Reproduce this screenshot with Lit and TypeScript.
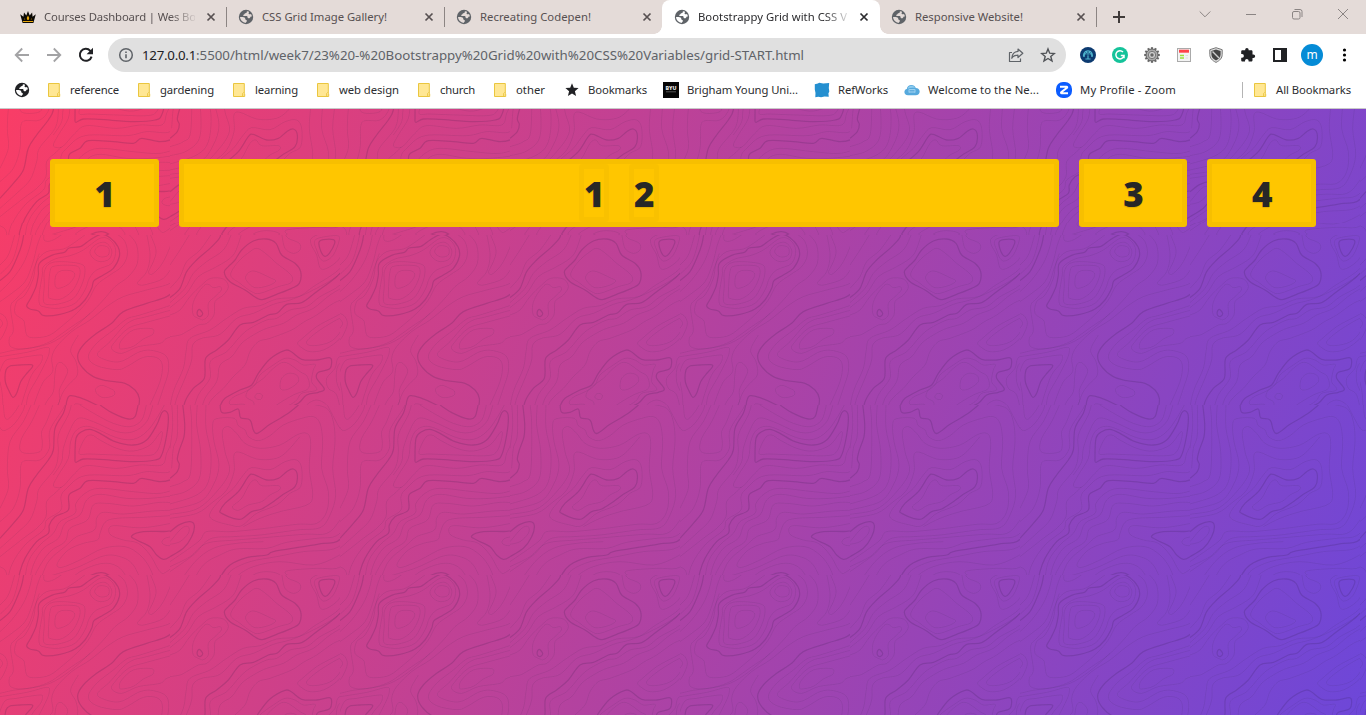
import { LitElement, html, css, svg } from "lit";
import { customElement } from "lit/decorators.js";

/* ---------- contour map background ---------- */

// Each quadrant of the tile lists its contours as flat "x,y" runs.
// A leading "h" marks a heavy line, a trailing "z" closes the loop.
const Q1 = `
h80,212 92,190 108,155 115,120 118,85 155,61 193,52 207,39 243,34 270,15 303,-2 330,8 354,35 358,65 340,100 310,120 282,137 275,160 255,195 225,222 180,238 132,242 115,228 90,222 z
h0,137 30,110 50,70 65,30 72,-6
h540,150 500,185 440,205 370,230 335,265 290,295 250,330 233,362 245,395 280,425 320,437 375,445 405,465 418,490 415,520 408,545
h18,405 30,393 60,390 93,389 97,396 78,418 62,440 50,475 39,487 28,470 16,440 z
h195,545 200,500 210,482 240,488 290,510 340,540
h485,545 490,532 500,532 504,545
165,150 168,120 185,107 215,108 224,122 205,148 175,160 z
145,180 150,110 165,93 225,92 240,105 235,135 215,170 180,193 150,190 z
130,195 133,150 133,110 150,85 190,80 245,88 255,110 245,150 220,190 175,207 140,208 z
118,205 118,175 127,120 130,95 165,72 210,62 250,45 300,10 330,15 347,45 335,85 290,105 268,130 255,165 225,205 175,220 130,215 z
285,45 300,32 325,38 325,60 305,66 288,58 z
270,50 285,30 315,22 335,45 328,72 300,80 278,68 z
350,-4 375,20 382,60 365,95 330,120 290,150 265,195 230,235 190,270 150,300 110,308 82,303 75,275 70,255 45,235 50,200 75,180 100,130 110,80 140,50 190,42 220,25 260,-4
0,90 25,60 45,-4
0,118 38,75 60,-4
0,170 35,135 70,85 88,40 98,-4
0,200 35,175 75,140 98,85 112,30 125,-4
385,-4 410,30 412,85 385,125 345,155 310,195 265,240 215,275 180,300 150,320 110,335 65,342 32,335 28,310 40,285 32,215 50,190 85,150 104,95 118,55
0,355 45,345 115,335 165,318 220,280 270,235
132,-4 133,16 155,17 190,-4
440,-4 450,60 440,110 413,142 420,150 440,148 490,130 520,90 540,60
450,-4 468,45 460,80 446,110 455,118 480,95 500,60 520,10
540,110 510,145 440,165 370,185 320,215 270,255 215,290 170,335 155,370 158,410 130,440 105,500 95,540
540,200 500,215 420,240 380,252 340,285 290,325 265,365 290,392 350,404 380,395 430,367 470,368 487,390 480,440 450,510 435,545
540,218 440,245 400,255 370,275 330,320 293,355 310,372 360,380 420,350 460,347 500,365 505,410 490,460 470,520
540,235 440,262 385,280 345,320 335,342 365,355 415,335 480,325 500,310 540,300
358,335 365,315 400,285 455,281 458,298 430,312 400,334 365,342 z
288,460 305,451 325,458 343,468 340,482 310,488 290,475 z
220,545 222,512 235,507 270,520 310,540
0,235 15,245 22,268 10,300 0,315
0,252 8,265 0,280
-4,420 15,378 50,370 120,360 127,368 122,385 105,405 90,430 70,490 60,525 50,540
10,545 7,480 0,440
0,365 80,352 140,337 148,348 140,375 112,430 85,480 75,540
120,545 140,500 160,470 164,425 170,390 185,383 203,405 195,430 178,465 178,500 150,540
235,300 212,345 228,380 232,420 205,450 185,480 165,545
540,400 520,440 515,500 505,540`;

const Q2 = `
h163,112 175,95 195,75 215,45 250,18 290,12 318,25 335,60 375,85 392,110 388,145 365,160 320,178 280,193 262,190 225,165 180,140 z
h0,188 30,160 50,110 80,75 120,40 148,10 152,-4
h540,80 500,125 440,170 395,203 350,208 322,234 295,240 250,262 210,270 175,315 140,345 107,370 103,430 70,460 45,500 38,545
h210,545 205,521 175,530 152,533 150,515 165,490 210,465 245,450 265,415 300,372 345,346 365,351 395,373 440,375 478,368 485,380 478,402 445,412 440,430 463,462 445,472 410,480 385,505 350,520 310,545
h447,22 460,14 490,14 494,25 478,55 465,64 453,50 z
h540,395 527,420 530,455 540,475
h82,230 88,223 98,235 92,244 83,241 z
182,120 205,80 240,50 262,40 290,58 320,85 355,112 368,130 360,145 325,155 270,175 245,170 210,145 z
227,125 240,110 260,110 300,128 317,138 295,152 255,158 232,140 z
433,20 450,8 500,2 508,15 490,60 465,78 450,70 440,45 z
530,-4 523,35 505,75 470,100 450,98 440,60 424,30 424,10 450,-4
0,160 30,125 50,80 90,45 125,-4
0,90 30,45 60,-4
0,203 45,160 70,115 110,80 160,45 185,-4
0,218 50,175 85,125 140,95 190,60 215,-4
0,240 30,225 60,185 95,150 122,130 160,132 175,155 160,180 135,200 132,240 110,265 85,270 50,290 30,300 0,305
90,252 70,240 68,210 80,180 102,152 115,148 130,158 150,155 154,165 135,185 115,205 115,240 100,254 z
540,55 505,105 430,155 385,185 320,192 270,212 220,220 170,250 120,285 60,310 48,350 40,400 10,470 -4,540
540,65 505,120 420,170 360,195 310,208 250,235 200,250 150,298 95,310 68,330 65,375 45,430 20,490 8,545
540,100 510,150 450,185 410,215 360,225 320,250 290,255 240,280 210,305 170,350 122,378 120,430 85,480 65,545
540,145 480,180 430,220 380,240 340,265 290,280 250,300 215,325 185,365 150,390 140,440 105,490 90,545
540,185 490,205 440,240 400,262 365,285 300,310 265,320 240,350 225,390 190,425 160,460 120,500 110,545
383,325 395,312 440,275 490,248 520,235 530,255 525,290 500,320 460,345 420,350 395,338 z
410,320 440,292 490,260 515,250 522,268 500,305 470,325 425,332 z
245,545 230,522 222,508 180,508 188,488 230,468 255,450 270,420 310,390 345,370 375,375 400,390 435,388 430,405 425,440 440,465 395,475 375,500 320,530
228,485 240,460 280,430 310,400 345,382 390,410 412,425 415,460 370,480 320,510 285,540 255,520 250,500 z
330,455 335,430 355,415 380,420 385,440 360,460 338,465 z
255,483 263,475 277,480 272,493 258,491 z
335,-4 345,40 370,55 390,45 388,25 355,10 345,-4
540,350 505,368 495,400 470,430 475,460 500,480 515,545
540,370 505,390 500,440 520,490 530,545
395,545 410,510 440,495 470,510 485,545`;

const Q3 = `
h300,0 340,25 385,42 405,35 415,-4
h225,160 228,100 245,80 270,73 300,85 345,110 400,120 440,105 470,60 485,24 497,18 505,35 500,90 485,150 465,165 400,170 300,163 250,162 228,172 z
h198,-4 190,25 165,70 160,135 145,165 110,210 85,250 70,315 40,355 0,400
h540,190 520,220 480,230 425,220 400,235 340,230 265,227 240,250 207,270 205,315 165,335 148,360 145,385 110,410 75,460 60,500 52,545
h540,370 500,379 430,380 395,393 410,405 450,425 470,450 490,463 510,455 540,430
h240,540 265,515 305,503 340,520 355,545
237,145 255,100 275,90 300,105 350,130 400,138 450,120 483,80 485,100 470,140 440,152 350,150 270,147 z
540,390 495,400 487,415 510,422 540,405
-4,60 10,77 40,60 68,20 75,-4
10,-4 14,35 25,42 45,20 60,-4
120,-4 95,50 65,100 60,135 80,145 120,140 127,115 125,80 140,50 160,-4
95,-4 70,50 30,110 22,190 25,250 0,310
0,350 40,310 60,250 62,185 75,167 120,165 148,130 150,75 190,10 192,-4
0,430 50,385 90,345 110,290 118,250 165,190 175,140 175,90 205,30 215,-4
0,455 70,400 110,370 138,335 140,290 168,262 185,245
495,-4 470,40 440,80 400,103 350,98 270,65 230,75 212,110 205,160 175,210 160,240 172,248 190,243 225,205 260,182 350,190 420,180 485,180 500,145 515,100 515,-4
20,545 35,480 75,420 130,375 140,345 183,315 183,275 200,250 255,212 380,212 440,200 510,200 522,150 525,-4
545,245 480,265 400,260 300,250 255,265 228,295 225,325 180,350 160,385 120,420 85,470 72,545
540,270 450,280 380,280 300,268 260,285 240,330 195,355 175,400 130,430 100,480 85,545
540,295 480,292 400,303 320,295 280,300 262,345 210,370 195,410 150,440 110,500 100,545
540,315 460,318 370,327 310,322 290,340 283,375 230,395 195,425 145,470 115,545
540,330 430,337 350,340 315,352 300,385 292,405 250,415 205,435 172,475 185,487 240,465 310,430 375,425 420,450 450,490 470,545
540,350 430,368 350,362 328,368 332,390 370,405 415,415 450,450 480,500 500,500 540,465
130,545 130,520 160,510 230,488 310,453 360,455 400,480 430,545
190,545 240,500 310,475 360,490 395,545
270,545 300,525 335,545
0,485 15,495 20,515 10,545
440,-4 425,45 390,65 340,55 290,30 240,0
460,-4 440,50 400,80 350,80 280,50 235,40 210,75 190,130 185,170 160,210`;

const Q4 = `
h0,220 22,200 28,178 22,163 28,135 42,95 44,55 38,-4
h150,-4 155,22 180,22 205,12 212,38 240,45 250,75 262,85 300,58 350,28 390,-4
h150,318 165,295 205,260 235,215 250,208 290,225 325,220 350,200 370,192 382,210 375,245 340,268 310,290 275,312 245,320 215,342 190,340 155,325 z
h0,380 30,358 60,350 73,362 65,395 40,430 0,455
h540,375 500,410 460,415 400,425 310,440 290,450 230,458 180,480 155,510 145,545
h238,545 260,525 290,520 312,545
h450,545 465,532 492,530 490,545
187,305 215,280 240,235 258,225 275,242 325,242 328,255 300,270 275,290 235,300 205,316 z
0,410 35,370 55,365 55,385 30,410 0,418
5,190 10,130 22,90 22,-4
0,130 8,60 5,-4
60,-4 65,60 62,200 40,230 0,245
82,-4 80,60 92,140 88,220 50,258 0,272
108,-4 108,70 123,150 115,230 80,270 0,297
0,315 90,290 130,240 147,180 132,110 128,60 140,41 192,40 205,62 225,75 235,95 265,107 300,92 340,60 395,40 430,35 450,55 458,110 455,190 475,260 470,320 440,355 380,358 270,372 180,380 110,380 85,410 0,470
0,328 80,312 140,260 178,200 165,140 157,80 175,65 200,85 225,115 270,130 330,120 380,90 410,85 422,110 418,190 428,270 410,300 330,320 270,340 220,365
0,340 80,325 130,290 170,255 192,200 192,150 210,142 260,162 310,162 345,145 390,95
120,325 150,285 190,250 220,210 245,188 300,194 345,170 380,165 395,190 392,245 360,265 320,300 260,325 215,362 180,360 130,345 z
415,-4 470,10 490,50 495,110 488,190 497,270 480,330 450,368 380,375 270,390 190,395 120,402 70,450 0,500
0,485 60,455 110,415 200,405 260,400 400,388 470,385 510,345 540,290
470,-4 510,70 525,76 540,70
515,-4 522,40 540,50
540,345 500,392 440,400 350,412 290,430 200,432 150,450 100,480 60,545
20,545 75,470 130,430 200,415 280,410
540,400 490,432 400,440 320,455 240,470 180,500 170,540
540,425 500,455 430,480 330,470 250,485 200,515 190,545
540,465 500,490 440,490 350,498 360,515 390,520 400,545
225,545 250,510 290,500 330,510 340,545
425,545 430,525 480,515 505,520 505,545`;

const smooth = (p: number[][], closed: boolean) => {
  const n = p.length;
  const at = (i: number) => (closed ? p[(i + n) % n] : p[Math.max(0, Math.min(n - 1, i))]);
  let d = `M${p[0][0]} ${p[0][1]}`;
  for (let i = 0; i < (closed ? n : n - 1); i++) {
    const [a, b, c, e] = [at(i - 1), at(i), at(i + 1), at(i + 2)];
    d += `C${b.map((v, k) => (v + (c[k] - a[k]) / 6).toFixed(1)).join(" ")} ${c
      .map((v, k) => (v - (e[k] - b[k]) / 6).toFixed(1))
      .join(" ")} ${c[0]} ${c[1]}`;
  }
  return d;
};

const contours = (src: string, heavy: boolean) =>
  src
    .trim()
    .split("\n")
    .filter((l) => l.startsWith("h") === heavy)
    .map((l) => {
      const closed = l.trim().endsWith("z");
      const pts = l.replace(/[hz]/g, "").trim().split(" ").map((s) => s.split(",").map(Number));
      return smooth(pts, closed);
    })
    .join("");

@customElement("topo-map")
export class TopoMap extends LitElement {
  static styles = css`
    :host { display: block; position: absolute; inset: 0; }
    .map { display: block; width: 100%; height: 100%; }
    path { fill: none; stroke: #26123c; }
    .thin { stroke-width: 2.6; stroke-opacity: 0.1; }
    .heavy { stroke-width: 3.8; stroke-opacity: 0.16; }
  `;
  render() {
    const quads = [Q1, Q2, Q3, Q4];
    return html`<svg class="map">
      <defs>
        <pattern id="tile" width="1020" height="1020" patternUnits="userSpaceOnUse"
          patternTransform="translate(0 126) scale(0.333333)">
          ${quads.map(
            (q, i) => svg`<svg x=${(i % 2) * 510} y=${i > 1 ? 510 : 0} width="510" height="510">
              <path class="thin" d=${contours(q, false)}></path>
              <path class="heavy" d=${contours(q, true)}></path>
            </svg>`
          )}
        </pattern>
      </defs>
      <rect width="100%" height="100%" fill="url(#tile)"></rect>
    </svg>`;
  }
}

/* ---------- label whose tracking fills a given width ---------- */

@customElement("fit-label")
export class FitLabel extends LitElement {
  static properties = { text: {}, width: { type: Number } };
  declare text: string;
  declare width: number;
  static styles = css`
    :host { display: block; white-space: nowrap; }
    .t { display: inline-block; white-space: pre; }
  `;
  render() {
    return html`<span class="t">${this.text}</span>`;
  }
  updated() {
    const el = this.renderRoot.querySelector(".t") as HTMLElement;
    el.style.letterSpacing = "0px";
    const w = el.getBoundingClientRect().width;
    el.style.letterSpacing = `${(this.width - w) / this.text.length}px`;
  }
}

/* ---------- icons ---------- */

const globe = (c: string, bg: string) => svg`<svg class="i16" viewBox="0 0 16 16">
  <circle cx="8" cy="8" r="7.2" fill=${c}></circle>
  <path fill=${bg} d="M8.800 2.200C9.200 3.300 8.600 3.900 7.300 4.200 6.500 4.400 6.800 5.200 6 5.600 5.200 6 5 6.800 5.600 7.100H8.400c1 0 1.200.7 1.200 1.400 0 .6.500.7 1.200.7 1.200 0 1.400-.8 1.600-1.300.4-.5 1-.6 1.500-.4-.1-1-.4-1.900-.9-2.600-.6.5-1.500.6-2.100.1-.5-.4-.3-1.200.1-1.600L10.700 2.600A6 6 0 0 0 8.800 2.200z"></path>
  <path fill=${bg} d="M2 8.100h2.600c1.700 0 2.700.8 2.800 2.100 0 .5.3.7.900.8.6.2.6.8.5 1.300-.2.6-.7.7-1 1.200l-.1.4A6 6 0 0 1 2 8.100z"></path></svg>`;

const folder = svg`<svg class="i16" viewBox="0 0 16 16"><path d="M2.5 1.5h10.8v9.7l.4.6v2.7H2.5z" fill="#ffe794" stroke="#eac63f"></path><path d="M11.7 14.5v-3.1l.9-1" fill="none" stroke="#eac63f"></path></svg>`;
const star = svg`<svg class="i16" viewBox="0 0 16 16"><path fill="#202124" d="M8 1.3l1.8 4.5 4.8.3-3.7 3.1 1.2 4.8L8 11.4 3.9 14l1.2-4.8L1.4 6.1l4.8-.3z"></path></svg>`;
const byu = svg`<svg class="i16" viewBox="0 0 16 16"><rect width="16" height="16" fill="#050505"></rect><text x="8" y="7.6" text-anchor="middle" textLength="11" lengthAdjust="spacingAndGlyphs" font-family="Noto Sans" font-weight="800" font-size="4.6" fill="#eee">BYU</text><path d="M3 9.8h10" stroke="#555"></path></svg>`;
const ref = svg`<svg class="i16" viewBox="0 0 16 16"><path fill="#248fd0" d="M.8 2.200l3-.6L5.200.8l4 .6 6-.4-.4 5 .5 3.600-.9 1.800.4 3.300-4.300-.2-3.400.800-2.800-.5-3 .4.200-4.300-.7-3.300z"></path></svg>`;
const cloud = svg`<svg class="i16" viewBox="0 0 16 16"><path fill="#56a9dd" d="M4 13.200C1.600 13.200.4 11.800.4 9.900c0-1.600 1-2.700 2.400-3C3.200 4.400 5 3 7.400 3c2.100 0 3.700 1.100 4.400 2.900 2.300 0 3.900 1.500 3.900 3.600 0 2.200-1.600 3.700-4 3.700z"></path><path fill="#8ccbee" d="M3.600 6.800C4 4.600 5.600 3.700 7.400 3.700c1.800 0 3 .8 3.700 2.500-2-.7-4.800-.4-7.500.6z"></path><rect x="4.500" y="7" width="7" height="4" rx="1" fill="#9bd2f2"></rect><path d="M5.500 8.500h5M5.500 10h5" stroke="#4a9fd6" stroke-width=".7"></path></svg>`;
const zoomIcon = svg`<svg class="i16" viewBox="0 0 16 16"><rect width="16" height="16" rx="7" fill="#0b5cff"></rect><path d="M4 4.700h6.600c.6 0 .8.600.4 1L5.200 10.300c-.4.500-.2 1 .4 1h6.400" fill="none" stroke="#fff" stroke-width="2"></path></svg>`;
const crown = svg`<svg class="i16" viewBox="0 0 16 16"><path fill="#0b0904" d="M2.600 14L.2 5.200l3.200 2.600L4 3.400l2.300 3L8 2l1.700 4.400 2.400-3 .5 4.400 3.200-2.600L13.400 14z"></path><path fill="#e9a90f" d="M8 6.600l1.300 2.500-.7 2H7.400l-.7-2zM2.900 12h10.200v.9H2.900z"></path><path fill="#a8780c" d="M4 9l1.300 1.300L4.600 11zM12 9l-1.300 1.300.7.7z"></path></svg>`;
const cross = svg`<svg class="cross" viewBox="0 0 10 10"><path d="M1.500 1.500l7 7M8.500 1.500l-7 7" stroke="currentColor" stroke-width="1.700"></path></svg>`;

const TABS = [
  { title: "Courses Dashboard | Wes Bo", w: 152, icon: "crown", fade: true },
  { title: "CSS Grid Image Gallery!", w: 125 },
  { title: "Recreating Codepen!", w: 111 },
  { title: "Bootstrappy Grid with CSS V", w: 149, active: true, fade: true },
  { title: "Responsive Website!", w: 108 },
] as { title: string; w: number; icon?: string; active?: boolean; fade?: boolean }[];

const MARKS: [unknown, string, number, number][] = [
  [folder, "reference", 49, 50],
  [folder, "gardening", 54, 55],
  [folder, "learning", 43, 44],
  [folder, "web design", 60, 61],
  [folder, "church", 35, 36],
  [folder, "other", 29, 32],
  [star, "Bookmarks", 59, 59],
  [byu, "Brigham Young Uni...", 111, 111],
  [ref, "RefWorks", 50, 50],
  [cloud, "Welcome to the Ne...", 111, 112],
  [zoomIcon, "My Profile - Zoom", 96, 96],
];

const gearTeeth = Array.from({ length: 12 }, (_, i) => i * 30);

@customElement("app-root")
export class AppRoot extends LitElement {
  static styles = css`
    :host { display: flex; flex-direction: column; width: 100vw; height: 100vh; overflow: hidden; font-family: "Noto Sans", sans-serif; font-size: 11.3px; color: #2c2d30; background: #fff; }
    * { box-sizing: border-box; }
    svg { display: block; flex: none; }
    .i16 { width: 16px; height: 16px; }
    .strip { display: flex; height: 34px; background: #e4dbd8; padding-left: 8px; flex: none; }
    .tab { position: relative; display: flex; align-items: center; width: 218px; padding: 0 10px 0 12px; color: #575051; }
    .tab.last { width: 217px; padding-left: 11px; }
    .tab.active { background: #fff; border-radius: 8px 8px 0 0; color: #2b2b2e; }
    .tab.active::before, .tab.active::after { content: ""; position: absolute; bottom: 0; width: 8px; height: 8px; }
    .tab.active::before { left: -8px; background: radial-gradient(circle at 0 0, transparent 7.5px, #fff 8px); }
    .tab.active::after { right: -8px; background: radial-gradient(circle at 100% 0, transparent 7.5px, #fff 8px); }
    .title { width: 151px; margin-left: 8px; padding-bottom: 1px; }
    .title.fade { mask-image: linear-gradient(90deg, #000 126px, transparent 154px); }
    .cross { width: 10px; height: 10px; margin-left: 11px; }
    .active .cross, .last .cross { margin-left: 10px; }
    .tab.div::after { content: ""; position: absolute; right: 0; top: 7px; width: 1px; height: 20px; background: #8c8583; }
    .tab.div:not(.last)::after { right: -1px; }
    .plus { width: 14px; height: 14px; margin: 10px 0 0 15px; }
    .win { display: flex; margin-left: auto; padding: 8px 17px 0 0; gap: 34px; }
    .win svg { width: 12px; height: 12px; fill: none; stroke: #8a8483; }
    .bar { display: flex; align-items: center; height: 42px; flex: none; }
    .nav { display: flex; width: 108px; padding-left: 14px; gap: 16px; }
    .omni { display: flex; align-items: center; width: 958px; height: 34px; border-radius: 17px; background: #e0e0e0; padding: 0 10px; }
    .url { display: flex; margin-left: 8px; font-size: 13.3px; color: #5f6368; flex: 1; }
    .host { color: #202124; }
    .omni .share { margin-right: 16px; }
    .ext { display: flex; align-items: center; gap: 16px; padding-left: 14px; }
    .ava { display: flex; align-items: center; justify-content: center; width: 22px; height: 22px; margin: 0 -3px; border-radius: 50%; background: #058bd6; color: #fff; font-size: 12px; padding-bottom: 1px; }
    .marks { display: flex; align-items: center; gap: 16px; height: 33px; padding: 0 15px 5px 14px; border-bottom: 1px solid #c9c9c9; flex: none; }
    .mark { display: flex; align-items: center; gap: 8px; }
    .marks fit-label { flex: none; }
    .all { margin-left: auto; }
    .all::before { content: ""; width: 1px; height: 16px; background: #b4b4b4; margin-right: 1px; }
    .page { position: relative; flex: 1; background: linear-gradient(110deg, #f93d66, #6d47d9); padding: 50px; }
    .grid { position: relative; display: grid; grid-template-columns: repeat(10, 1fr); gap: 20px; }
    .item { display: flex; align-items: center; justify-content: center; gap: 20px; height: 68px; padding: 1px 0 0 1px; background: #ffc600; border-radius: 3px; box-shadow: inset 0 0 0 5px rgba(0, 0, 0, 0.03); color: #272727; font-size: 35px; font-weight: 900; line-height: 1; text-shadow: 0 1px 1px rgba(0, 0, 0, 0.12); }
    .wide { grid-column: span 7; padding: 0; }
    .cell { display: flex; align-items: center; justify-content: center; width: 30px; height: 58px; padding: 1px 0 0 1px; border-radius: 3px; box-shadow: inset 0 0 0 5px rgba(0, 0, 0, 0.025); }
  `;

  label(text: string, w: number) {
    return html`<fit-label .text=${text} .width=${w}></fit-label>`;
  }

  renderTabs() {
    return TABS.map((t, i) => {
      const cls = `tab ${t.active ? "active" : ""} ${!t.active && i !== 2 ? "div" : ""} ${i === TABS.length - 1 ? "last" : ""}`;
      return html`<div class=${cls}>
        ${t.icon ? crown : globe("#5f6368", t.active ? "#fff" : "#e4dbd8")}
        <div class="title ${t.fade ? "fade" : ""}">${this.label(t.title, t.w)}</div>
        ${cross}
      </div>`;
    });
  }

  render() {
    return html`
      <div class="strip">
        ${this.renderTabs()}
        <svg class="plus" viewBox="0 0 14 14"><path d="M7 1v12M1 7h12" stroke="#403b3a" stroke-width="2"></path></svg>
        <div class="win">
          <svg viewBox="0 0 12 12"><path d="M.7 3.5L6 8.800l5.300-5.300"></path></svg>
          <svg viewBox="0 0 12 12"><path d="M1 6.500h10"></path></svg>
          <svg viewBox="0 0 12 12"><rect x="1.500" y="3.500" width="7.500" height="7.500" rx="1.500"></rect><path d="M3.500 1.500h5.500q2 0 2 2v5.500"></path></svg>
          <svg viewBox="0 0 12 12"><path d="M1 1l10 10M11 1L1 11"></path></svg>
        </div>
      </div>
      <div class="bar">
        <div class="nav">
          <svg class="i16" viewBox="0 0 16 16"><path d="M15 8H2M8.200 1.500L1.700 8l6.500 6.500" fill="none" stroke="#a3a3a5" stroke-width="1.800"></path></svg>
          <svg class="i16" viewBox="0 0 16 16"><path d="M1 8h13M7.800 1.500L14.300 8l-6.500 6.500" fill="none" stroke="#a3a3a5" stroke-width="1.800"></path></svg>
          <svg class="i16" viewBox="0 0 16 16"><path d="M13.600 9.600A6 6 0 1 1 12.300 3.800L14 5.500" fill="none" stroke="#202124" stroke-width="2"></path><path d="M15 .8v6.400H8.600z" fill="#202124"></path></svg>
        </div>
        <div class="omni">
          <svg class="i16" viewBox="0 0 16 16"><circle cx="8" cy="8" r="6.300" fill="none" stroke="#5f6368" stroke-width="1.500"></circle><path d="M8 7.200v4.100M8 4.400V6" stroke="#5f6368" stroke-width="1.600"></path></svg>
          <div class="url"><span class="host">${this.label("127.0.0.1", 54)}</span>${this.label(":5500/html/week7/23%20-%20Bootstrappy%20Grid%20with%20CSS%20Variables/grid-START.html", 608)}</div>
          <svg class="i16 share" viewBox="0 0 16 16"><path d="M4 5.500H1.500v9h11v-3M10 2l4.800 4.300L10 10.500V8.200C7 8.200 5 9.300 3.800 11.300 4 7.500 6 4.800 10 4.400z" fill="none" stroke="#5f6368" stroke-width="1.200" stroke-linejoin="round"></path></svg>
          <svg class="i16" viewBox="0 0 16 16"><path d="M8 1.900l1.700 4.300 4.700.3-3.600 3 1.200 4.500L8 11.500 4 14l1.200-4.500-3.600-3 4.700-.3z" fill="none" stroke="#505357" stroke-width="1.400"></path></svg>
        </div>
        <div class="ext">
          <svg class="i16" viewBox="0 0 16 16"><circle cx="8" cy="8" r="8" fill="#0c3a70"></circle><path fill="#4fb4cc" d="M3 9.800C2.600 6 4.800 3.200 8 3.200s5.400 2.800 5 6.600h-2l.2-2-1.600-.8-1 1.500v3h2v1H5.400v-1h2v-3l-1-1.500-1.600.8.200 2z"></path><path d="M8 4v5M5.500 5.500L7 7.500M10.500 5.500L9 7.500" stroke="#0c3a70" stroke-width=".8"></path></svg>
          <svg class="i16" viewBox="0 0 16 16"><circle cx="8" cy="8" r="8" fill="#15c39a"></circle><path d="M11 5A4.100 4.100 0 1 0 12 8.600H8.800M12 8.200v3" fill="none" stroke="#fff" stroke-width="1.500"></path></svg>
          <svg class="i16" viewBox="0 0 16 16">${gearTeeth.map((a) => svg`<rect x="6.900" y=".2" width="2.200" height="3" fill="#666" transform="rotate(${a} 8 8)"></rect>`)}<circle cx="8" cy="8" r="6" fill="#aaa" stroke="#666"></circle><circle cx="8" cy="8" r="3.700" fill="#ccc" stroke="#777"></circle><circle cx="8" cy="8" r="1.700" fill="#666"></circle></svg>
          <svg class="i16" viewBox="0 0 16 16"><rect x="1.500" y="1.500" width="13" height="13" fill="#f3f3f3" stroke="#aaa"></rect><path d="M3 4.200h10" stroke="#ff4248" stroke-width="3"></path><path d="M4 8.500h4M4 11h4" stroke="#9be03c" stroke-width="1.500"></path><path d="M9.500 8.500H12M9.500 11H12" stroke="#ddd"></path></svg>
          <svg class="i16" viewBox="0 0 16 16"><path d="M8 .7l6.200 2v4.800c0 3.500-2.300 6-6.200 7.900-3.900-1.900-6.200-4.400-6.200-7.900V2.700z" fill="#ddd" stroke="#777"></path><path d="M8 2.500l4.600 1.400v3.600c0 2.600-1.700 4.500-4.600 6-2.900-1.500-4.600-3.400-4.600-6V3.900z" fill="#444"></path><path d="M4.500 4.500l6.500 6.500" stroke="#ccc" stroke-width="1.400"></path></svg>
          <svg class="i16" viewBox="0 0 16 16"><path fill="#202124" d="M13.400 7.500h-.9V4.600c0-.8-.6-1.300-1.300-1.300H8.600v-.7a1.700 1.700 0 0 0-3.400 0v.7H2.500c-.7 0-1.300.5-1.300 1.300v2.500h.9a1.800 1.800 0 0 1 0 3.600h-.9v2.600c0 .8.600 1.300 1.300 1.300H5v-.9a1.800 1.800 0 0 1 3.600 0v.9h2.600c.7 0 1.300-.5 1.300-1.300V11h.9a1.750 1.750 0 0 0 0-3.500z"></path></svg>
          <svg class="i16" viewBox="0 0 16 16"><rect x="2" y="2" width="12" height="12" fill="#fff" stroke="#202124" stroke-width="2"></rect><path d="M9 1h6v14H9z" fill="#202124"></path></svg>
          <div class="ava">m</div>
          <svg class="i16" viewBox="0 0 16 16"><circle cx="8.500" cy="3" r="1.600"></circle><circle cx="8.500" cy="8" r="1.600"></circle><circle cx="8.500" cy="13" r="1.600"></circle></svg>
        </div>
      </div>
      <div class="marks">
        ${globe("#202124", "#fff")}
        ${MARKS.map(([ic, t, w, slot]) => html`<div class="mark" style="width:${slot + 24}px">${ic}${this.label(t, w)}</div>`)}
        <div class="mark all">${folder}${this.label("All Bookmarks", 75)}</div>
      </div>
      <div class="page">
        <topo-map></topo-map>
        <div class="grid">
          <div class="item">1</div>
          <div class="item wide"><div class="cell">1</div><div class="cell">2</div></div>
          <div class="item">3</div>
          <div class="item">4</div>
        </div>
      </div>`;
  }
}
